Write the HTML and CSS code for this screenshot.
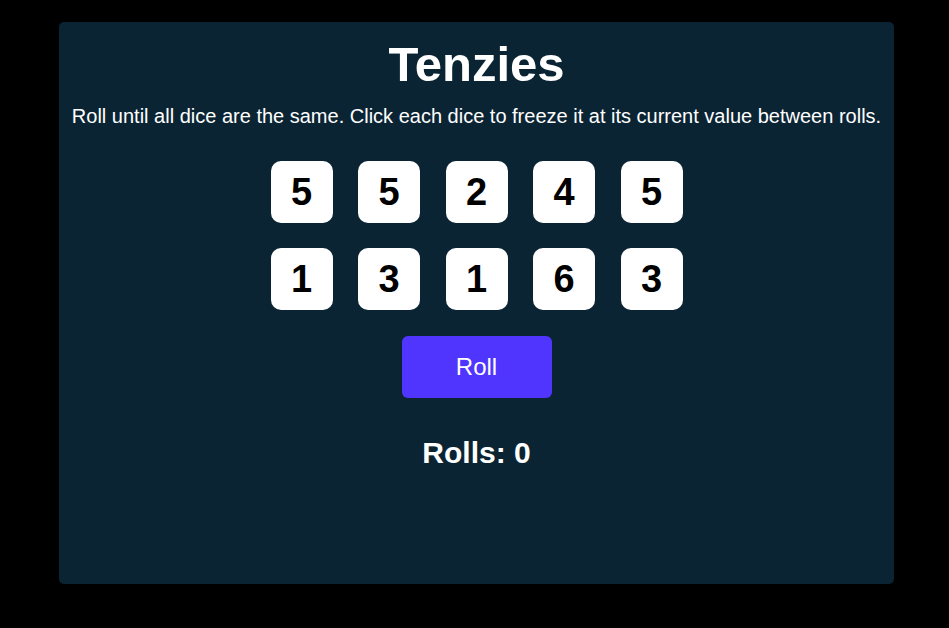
FILE: index.html
```html
<!DOCTYPE html>
<html>
<head>
<meta charset="utf-8">
<link rel="stylesheet" href="styles.css">
</head>
<body>
<main class="panel">
  <h1 class="title">Tenzies</h1>
  <p class="instructions">Roll until all dice are the same. Click each dice to freeze it at its current value between rolls.</p>
  <div class="dice-grid">
    <div class="die">5</div>
    <div class="die">5</div>
    <div class="die">2</div>
    <div class="die">4</div>
    <div class="die">5</div>
    <div class="die">1</div>
    <div class="die">3</div>
    <div class="die">1</div>
    <div class="die">6</div>
    <div class="die">3</div>
  </div>
  <button class="roll-btn">Roll</button>
  <h2 class="rolls">Rolls: 0</h2>
</main>
</body>
</html>
```
FILE: styles.css
```css
html, body {
  margin: 0;
  padding: 0;
  background: #000;
  font-family: "Liberation Sans", Arial, sans-serif;
}
.panel {
  margin: 22px 0 0 59px;
  width: 835px;
  height: 562px;
  background: #0B2434;
  border-radius: 5px;
  display: flex;
  flex-direction: column;
  align-items: center;
  color: #fff;
}
.title {
  margin: 14px 0 0;
  font-size: 49px;
  line-height: 56px;
  font-weight: 700;
}
.instructions {
  margin: 12px 0 0;
  font-size: 20px;
  line-height: 24px;
  text-align: center;
}
.dice-grid {
  margin-top: 33px;
  display: grid;
  grid-template-columns: repeat(5, 62px);
  column-gap: 25.5px;
  row-gap: 25px;
}
.die {
  width: 62px;
  height: 62px;
  background: #fff;
  border-radius: 10px;
  color: #000;
  font-size: 38px;
  font-weight: 700;
  display: flex;
  align-items: center;
  justify-content: center;
}
.roll-btn {
  margin-top: 26px;
  width: 150px;
  height: 62px;
  border: none;
  border-radius: 6px;
  background: #5035FF;
  color: #fff;
  font-family: "Liberation Sans", Arial, sans-serif;
  font-size: 24px;
}
.rolls {
  margin: 37px 0 0;
  font-size: 30px;
  line-height: 36px;
  font-weight: 700;
}
```
